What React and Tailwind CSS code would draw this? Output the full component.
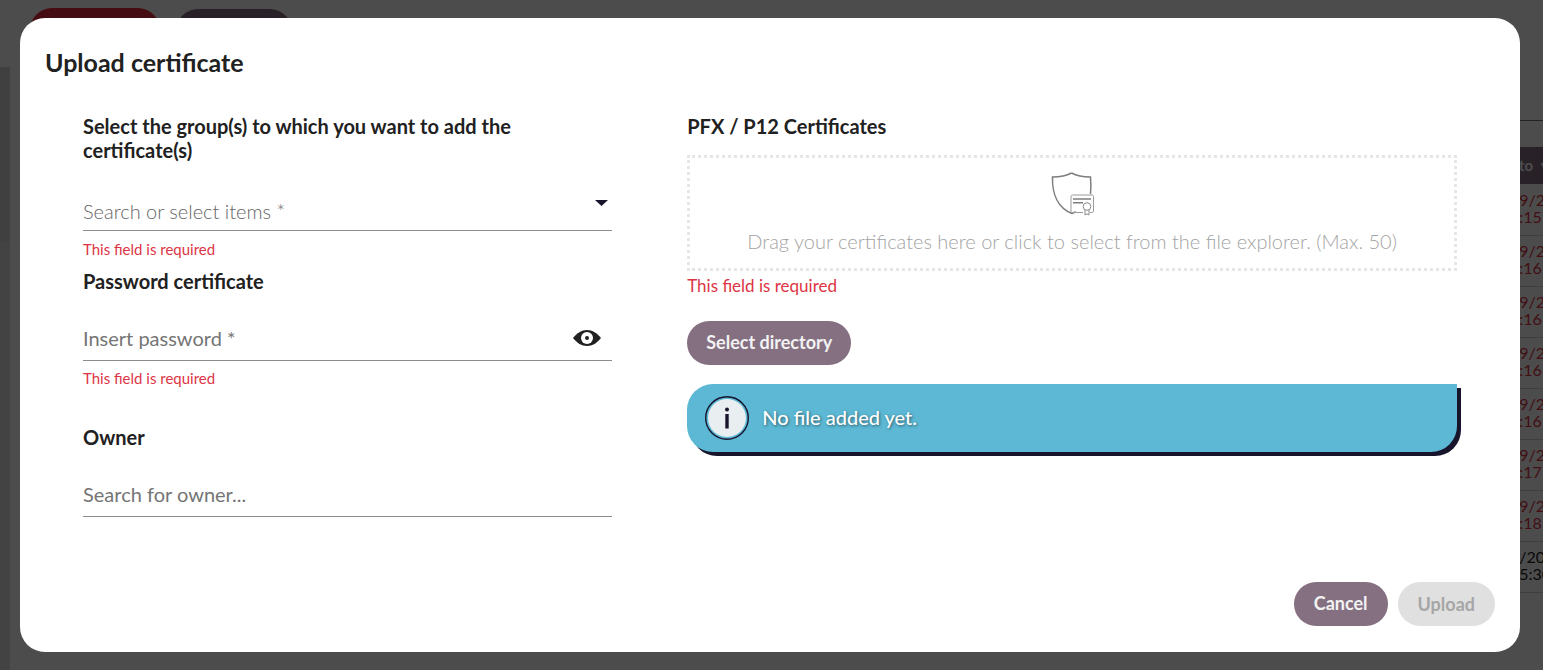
import React, { useState } from "react";

const rows = [
  { date: "09/20", time: "5:15", expired: true },
  { date: "09/20", time: "5:16", expired: true },
  { date: "09/20", time: "5:16", expired: true },
  { date: "09/20", time: "5:16", expired: true },
  { date: "09/20", time: "5:16", expired: true },
  { date: "09/20", time: "5:17", expired: true },
  { date: "09/20", time: "5:18", expired: true },
  { date: "1/20", time: "15:30", expired: false },
];

function ShieldIcon() {
  return (
    <svg className="ml-[2px]" width="44" height="44" viewBox="0 0 44 44" fill="none" stroke="#7d7d7d" aria-hidden="true">
      <path
        strokeWidth="1.5"
        d="M20.5 1C15 4 8 5 1.5 5C1 22 7 36 21 41.5C22.500 41 23.500 40.500 24.500 39.500M39.500 22C40 17 40 11 39.500 5C33 5 26 4 20.500 1"
      />
      <path
        stroke="#9a9a9a"
        d="M32 40.500H21.500C20.500 40.500 20 40 20 39V24.500C20 23.500 20.500 23 21.500 23H41C42 23 42.500 23.500 42.500 24.500V39C42.500 40 42 40.500 41 40.500H39"
      />
      <path strokeWidth="1.4" d="M22 27H40M22 30.700H32" />
      <circle cx="36" cy="34.500" r="3.800" stroke="#8a8a8a" fill="#fff" />
      <path stroke="#8a8a8a" d="M34 38V43L36 41.800L38 43V38" />
    </svg>
  );
}

function EyeIcon() {
  return (
    <svg width="28" height="16" viewBox="0 0 28 16" aria-hidden="true">
      <path fill="#212121" d="M0 8C4 3 8.500 0 14 0S24 3 28 8C24 13 19.500 16 14 16S4 13 0 8Z" />
      <circle cx="14" cy="8" r="6" fill="#fff" />
      <circle cx="14" cy="8" r="2" fill="#212121" />
    </svg>
  );
}

function InfoIcon() {
  return (
    <svg width="44" height="44" viewBox="0 0 44 44" aria-hidden="true">
      <circle cx="22" cy="22" r="21.300" fill="#5cb8d4" stroke="#17142c" strokeWidth="1.400" />
      <circle cx="22" cy="22" r="19" fill="#e9eef1" />
      <circle cx="22" cy="13.500" r="2" fill="#17142c" />
      <rect x="20.300" y="18" width="3.400" height="14.500" fill="#17142c" />
    </svg>
  );
}

function CertificatesPage() {
  return (
    <div className="flex h-screen flex-col overflow-hidden bg-white" aria-hidden="true">
      <div className="flex h-[67px] shrink-0 items-start gap-4 pt-2 pl-[30px]">
        <div className="h-11 w-[130px] rounded-full bg-[#e82c3e]"></div>
        <div className="mt-px h-11 w-[116px] rounded-full bg-[#857082]"></div>
      </div>
      <div className="flex flex-1 justify-between">
        <div className="flex w-[10px] flex-col bg-[#dfe1e4]">
          <div className="h-[175px] bg-[#d2d6d4]"></div>
        </div>
        <div className="w-[33px] pt-[53px]">
          <div className="h-[27px] border-t border-[#777]"></div>
          <table className="w-full table-fixed border-collapse text-[16px] leading-[17px]">
            <thead>
              <tr className="h-[37px] bg-[#857082] text-[15px] text-white">
                <th className="overflow-hidden p-0 pl-[9px] text-left whitespace-nowrap">
                  <span className="mr-2">to</span>▾
                </th>
              </tr>
            </thead>
            <tbody>
              {rows.map((row, i) => (
                <tr key={i} className="h-[51px] border-b border-[#d0d0d0]">
                  <td
                    className={
                      row.expired
                        ? "overflow-hidden p-0 pb-[3px] whitespace-nowrap text-[#dc3545]"
                        : "overflow-hidden p-0 pb-[3px] whitespace-nowrap text-[#212121]"
                    }
                  >
                    <span className="block">{row.date}</span>
                    <span className="block">{row.time}</span>
                  </td>
                </tr>
              ))}
            </tbody>
          </table>
        </div>
      </div>
    </div>
  );
}

export default function App() {
  const [group, setGroup] = useState("");
  const [password, setPassword] = useState("");
  const [showPassword, setShowPassword] = useState(false);
  const [owner, setOwner] = useState("");

  return (
    <div className="font-['Lato',sans-serif] text-[#212121]">
      <CertificatesPage />

      <div className="fixed inset-0 overflow-auto bg-black/70 py-[18px] pr-[23px] pl-5">
        <div
          role="dialog"
          aria-labelledby="dialog-title"
          className="flex min-h-full flex-col rounded-[25px] bg-white px-[25px] pt-6 pb-[26px]"
        >
          <h1 id="dialog-title" className="text-[25px] leading-10 font-bold">
            Upload certificate
          </h1>

          <div className="mt-8 grid grid-cols-[11fr_16fr] gap-[75px] px-[38px]">
            <div>
              <label htmlFor="group" className="block text-[20px] leading-6 font-bold">
                Select the group(s) to which you want to add the certificate(s)
              </label>
              <div className="flex h-[69px] items-end border-b border-[#8c8c8c]">
                <select
                  id="group"
                  value={group}
                  onChange={(e) => setGroup(e.target.value)}
                  className="mb-[6px] h-7 flex-1 appearance-none bg-transparent text-[20px] font-light text-[#666] outline-none"
                >
                  <option value="">Search or select items *</option>
                </select>
                <svg className="mr-1 mb-6" width="13" height="6" viewBox="0 0 13 6" aria-hidden="true">
                  <path d="M0 0H13L6.500 6Z" fill="#17142c" />
                </svg>
              </div>
              <p className="pt-2 text-[15px] leading-5 text-[#dc3545]">This field is required</p>

              <label htmlFor="password" className="mt-[10px] block text-[20px] leading-6 font-bold">
                Password certificate
              </label>
              <div className="flex h-[68px] items-end border-b border-[#8c8c8c]">
                <input
                  id="password"
                  type={showPassword ? "text" : "password"}
                  placeholder="Insert password *"
                  value={password}
                  onChange={(e) => setPassword(e.target.value)}
                  className="mb-2 h-7 flex-1 text-[20px] outline-none placeholder:text-[#757575]"
                />
                <button
                  type="button"
                  aria-label="Show password"
                  className="mr-[11px] mb-[14px]"
                  onClick={() => setShowPassword(!showPassword)}
                >
                  <EyeIcon />
                </button>
              </div>
              <p className="pt-[7px] text-[15px] leading-5 text-[#dc3545]">This field is required</p>

              <label htmlFor="owner" className="mt-[37px] block text-[20px] leading-6 font-bold">
                Owner
              </label>
              <div className="flex h-[68px] items-end border-b border-[#8c8c8c]">
                <input
                  id="owner"
                  type="text"
                  placeholder="Search for owner..."
                  value={owner}
                  onChange={(e) => setOwner(e.target.value)}
                  className="mb-2 h-7 flex-1 text-[20px] outline-none placeholder:text-[#757575]"
                />
              </div>
            </div>

            <div>
              <h2 className="text-[20px] leading-6 font-bold">PFX / P12 Certificates</h2>
              <label className="mt-[17px] flex h-[116px] cursor-pointer flex-col items-center border-3 border-dotted border-[#e6e6e6] pt-[14px]">
                <ShieldIcon />
                <span className="mt-[11px] text-[20px] leading-7 font-light text-[#a3a3a3]">
                  Drag your certificates here or click to select from the file explorer. (Max. 50)
                </span>
                <input type="file" multiple accept=".pfx,.p12" className="sr-only" />
              </label>
              <p className="pt-[3px] text-[17px] leading-6 text-[#dc3545]">This field is required</p>
              <button
                type="button"
                className="mt-[23px] block h-11 rounded-full bg-[#857082] px-[19px] pb-[2px] text-[18px] font-bold text-[#f2f2f2]"
              >
                Select directory
              </button>
              <div className="mt-[19px] flex h-[68px] items-center gap-[13px] rounded-[26px] rounded-tr-none bg-[#5cb8d4] pl-[18px] shadow-[4px_4px_0_#17142c]">
                <InfoIcon />
                <p className="pb-[2px] text-[20px] font-medium text-white text-shadow-[1px_1px_3px_rgba(0,0,0,0.5)]">
                  No file added yet.
                </p>
              </div>
            </div>
          </div>

          <div className="mt-auto flex justify-end gap-[10px]">
            <button
              type="button"
              className="h-11 rounded-full bg-[#857082] px-5 pb-[2px] text-[18px] font-bold text-[#f2f2f2]"
            >
              Cancel
            </button>
            <button
              type="button"
              disabled
              className="h-11 rounded-full bg-[#e0e0e0] px-5 text-[18px] font-bold text-[#a6a6a6]"
            >
              Upload
            </button>
          </div>
        </div>
      </div>
    </div>
  );
}
